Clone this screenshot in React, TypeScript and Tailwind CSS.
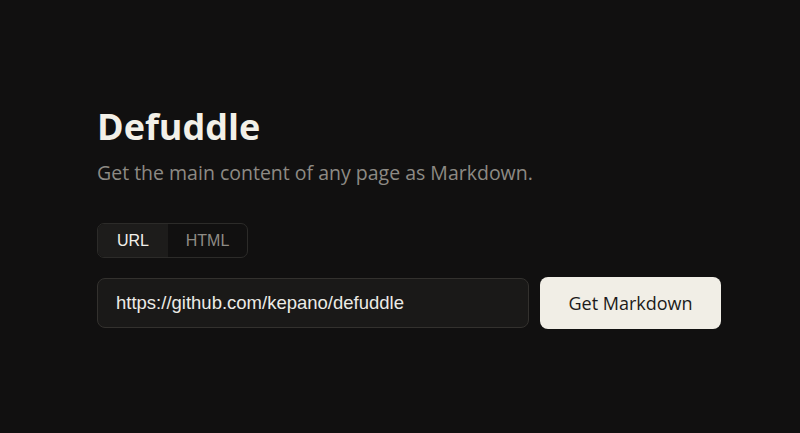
export default function App() {
  return (
    <div className="min-h-[433px] w-full bg-[#111010] font-['Open_Sans',sans-serif]">
      <div className="ml-[97px] w-[624px] pt-[104px]">
        <h1 className="text-[36px] font-bold leading-[46px] text-[#f3f0e8]">
          Defuddle
        </h1>
        <p className="mt-[10px] text-[19.5px] leading-[26px] text-[#8d8a84]">
          Get the main content of any page as Markdown.
        </p>

        <div className="mt-[37px] inline-flex h-[35px] overflow-hidden rounded-[7px] border border-[#2c2b29] font-['Liberation_Sans',Arial,sans-serif] text-[16px]">
          <button className="w-[70px] bg-[#1d1c1b] text-[#f2f0ea]">URL</button>
          <button className="w-[79px] text-[#8e8b85]">HTML</button>
        </div>

        <div className="mt-[19px] flex items-center gap-[11px]">
          <div className="flex h-[50px] w-[432px] items-center rounded-[8px] border border-[#33312e] bg-[#1a1918] px-[18px] font-['Liberation_Sans',Arial,sans-serif] text-[18.5px] text-[#ecebe6]">
            https://github.com/kepano/defuddle
          </div>
          <button className="h-[52px] w-[181px] rounded-[8px] bg-[#f1eee6] text-[18px] font-medium text-[#1c1b19]">
            Get Markdown
          </button>
        </div>
      </div>
    </div>
  );
}
